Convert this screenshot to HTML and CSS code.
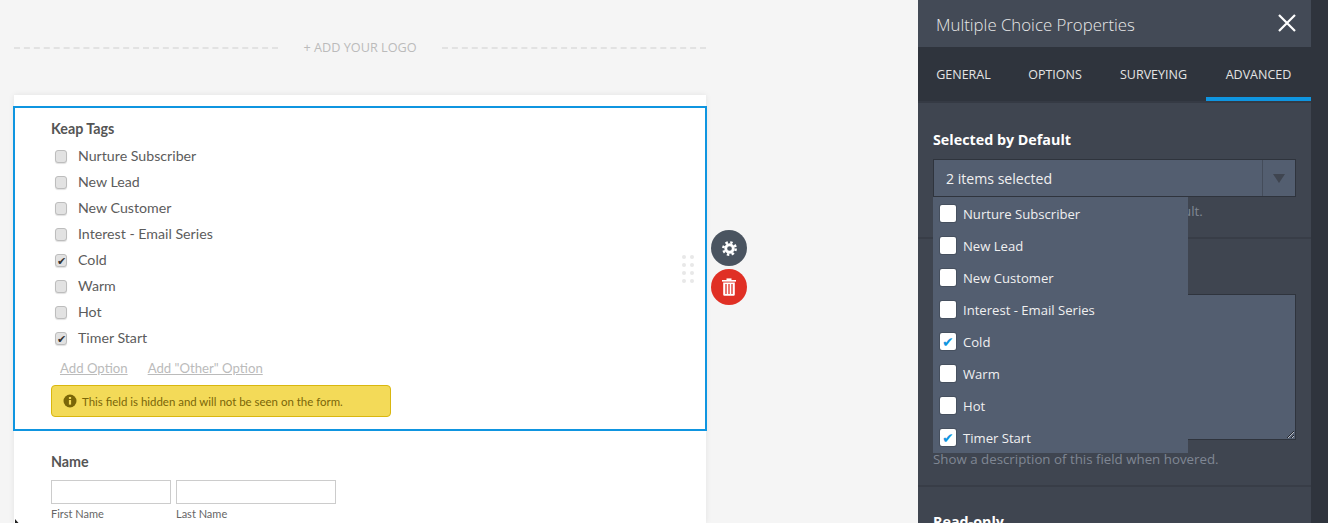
FILE: index.html
```html
<!DOCTYPE html>
<html lang="en">

<head>
    <meta charset="UTF-8" />
    <meta name="viewport" content="width=device-width, initial-scale=1.0" />
    <title>Form Builder</title>
    <link rel="stylesheet" href="styles.css">
</head>

<body>
    <main class="stage">
        <div class="logo-row">
            <span class="logo-line"></span>
            <span class="logo-text">+ ADD YOUR LOGO</span>
            <span class="logo-line"></span>
        </div>

        <div class="form-card">
            <section class="field-selected">
                <h3 class="field-label">Keap Tags</h3>
                <div class="option"><span class="box"></span>Nurture Subscriber</div>
                <div class="option"><span class="box"></span>New Lead</div>
                <div class="option"><span class="box"></span>New Customer</div>
                <div class="option"><span class="box"></span>Interest - Email Series</div>
                <div class="option"><span class="box checked">&#10004;</span>Cold</div>
                <div class="option"><span class="box"></span>Warm</div>
                <div class="option"><span class="box"></span>Hot</div>
                <div class="option"><span class="box checked">&#10004;</span>Timer Start</div>
                <div class="add-links">
                    <a href="#">Add Option</a>
                    <a href="#">Add "Other" Option</a>
                </div>
                <div class="notice">
                    <svg class="notice-icon" viewBox="0 0 14 14" width="14" height="14">
                        <circle cx="7" cy="7" r="6.5" fill="#7a6608" />
                        <rect x="5.9" y="6" width="2.2" height="4.6" fill="#f3da58" />
                        <rect x="5.9" y="3" width="2.2" height="2" fill="#f3da58" />
                    </svg>
                    This field is hidden and will not be seen on the form.
                </div>
                <div class="drag-dots">
                    <i></i><i></i><i></i><i></i><i></i><i></i><i></i><i></i>
                </div>
                <button class="round-btn gear-btn">
                    <svg viewBox="0 0 16 16" width="15" height="15">
                        <circle cx="8" cy="8" r="6.6" fill="none" stroke="#fff" stroke-width="2.6" stroke-dasharray="2.6 2.58" />
                        <circle cx="8" cy="8" r="4" fill="none" stroke="#fff" stroke-width="3" />
                    </svg>
                </button>
                <button class="round-btn trash-btn">
                    <svg viewBox="0 0 14 18" width="14" height="18">
                        <rect x="0" y="2" width="14" height="1.6" fill="#fff" />
                        <rect x="4.5" y="0.4" width="5" height="2" fill="#fff" />
                        <path d="M1.2 4.6h11.6v12a1.2 1.2 0 0 1-1.2 1.2H2.4a1.2 1.2 0 0 1-1.2-1.2z" fill="#fff" />
                        <path d="M4 6v10M7 6v10M10 6v10" stroke="#e03025" stroke-width="1.3" />
                    </svg>
                </button>
            </section>

            <section class="field-name">
                <h3 class="field-label">Name</h3>
                <div class="name-inputs">
                    <div class="name-col">
                        <input class="text-input first" type="text">
                        <span class="sub-label">First Name</span>
                    </div>
                    <div class="name-col">
                        <input class="text-input last" type="text">
                        <span class="sub-label">Last Name</span>
                    </div>
                </div>
            </section>
        </div>
    </main>

    <aside class="panel">
        <header class="panel-head">
            <span class="panel-title">Multiple Choice Properties</span>
            <svg class="panel-close" viewBox="0 0 18 18" width="18" height="18">
                <path d="M1 1l16 16M17 1L1 17" stroke="#fff" stroke-width="2.2" />
            </svg>
        </header>
        <nav class="tabs">
            <span class="tab tab-general">General</span>
            <span class="tab tab-options">Options</span>
            <span class="tab tab-surveying">Surveying</span>
            <span class="tab tab-advanced active">Advanced</span>
        </nav>

        <div class="section section-default">
            <div class="section-label">Selected by Default</div>
            <div class="select">
                <span class="select-value">2 items selected</span>
                <span class="select-arrow"></span>
                <div class="dropdown">
                    <div class="drop-item"><span class="drop-box"></span>Nurture Subscriber</div>
                    <div class="drop-item"><span class="drop-box"></span>New Lead</div>
                    <div class="drop-item"><span class="drop-box"></span>New Customer</div>
                    <div class="drop-item"><span class="drop-box"></span>Interest - Email Series</div>
                    <div class="drop-item"><span class="drop-box on">&#10004;</span>Cold</div>
                    <div class="drop-item"><span class="drop-box"></span>Warm</div>
                    <div class="drop-item"><span class="drop-box"></span>Hot</div>
                    <div class="drop-item"><span class="drop-box on">&#10004;</span>Timer Start</div>
                </div>
            </div>
            <div class="help help-default">ult.</div>
        </div>

        <div class="section section-hover">
            <textarea class="hover-text"></textarea>
            <div class="help">Show a description of this field when hovered.</div>
        </div>

        <div class="section section-readonly">
            <div class="section-label">Read-only</div>
        </div>
    </aside>
    <div class="panel-strip"></div>

    <svg class="cursor-mark" viewBox="0 0 4 4" width="4" height="4">
        <path d="M0 0l3.5 4H0z" fill="#222" />
    </svg>
</body>

</html>
```

FILE: styles.css
```css
* {
    box-sizing: border-box;
}

html,
body {
    height: 100%;
    margin: 0;
    overflow: hidden;
}

body {
    display: flex;
    font-family: Lato, "Open Sans", sans-serif;
    background: #f5f5f5;
    color: #555;
}

.stage {
    display: flex;
    flex-direction: column;
    width: 918px;
    height: 523px;
    flex: none;
    padding-top: 37px;
    padding-left: 14px;
}

.logo-row {
    display: flex;
    align-items: center;
    width: 692px;
    height: 20px;
}

.logo-line {
    width: 264px;
    margin-top: 2px;
    border-top: 2px dashed #e2e2e2;
}

.logo-text {
    width: 165px;
    text-align: center;
    font-family: "Open Sans", sans-serif;
    font-size: 12.7px;
    color: #bbb;
}

.form-card {
    flex: 1;
    width: 692px;
    margin-top: 38px;
    padding-top: 11px;
    background: #fff;
    box-shadow: 0 0 6px rgba(0, 0, 0, 0.08);
}

.field-selected {
    position: relative;
    height: 325px;
    margin: 0 -1px;
    padding: 11px 0 0 36px;
    border: 2px solid #0f95e0;
}

.field-label {
    margin: 0 0 4px;
    font-size: 14.3px;
    line-height: 20px;
    font-weight: 700;
    color: #555;
}

.option {
    display: flex;
    align-items: center;
    height: 26px;
    padding-bottom: 2px;
    font-size: 14.2px;
    color: #5c5c5c;
}

.box {
    width: 12px;
    height: 13px;
    margin: 2px 11px 0 4px;
    border: 1px solid #bdbdbd;
    border-radius: 3px;
    background: #e2e2e2;
    box-shadow: 0 1px 1px rgba(0, 0, 0, 0.12);
    font-size: 11px;
    line-height: 11px;
    text-align: center;
    color: #333;
}

.add-links {
    display: flex;
    gap: 20px;
    margin: 7px 0 0 9px;
    line-height: 20px;
    font-size: 13.2px;
}

.add-links a {
    color: #bbb;
}

.notice {
    display: flex;
    align-items: center;
    width: 340px;
    height: 32px;
    margin-top: 7px;
    padding-left: 11px;
    border: 1px solid #d9b70f;
    border-radius: 4px;
    background: #f3da58;
    font-size: 11.45px;
    color: #7a6608;
}

.notice-icon {
    margin-right: 5px;
}

.drag-dots {
    position: absolute;
    top: 147px;
    left: 667px;
    display: grid;
    grid-template-columns: 4px 4px;
    gap: 4px;
}

.drag-dots i {
    width: 4px;
    height: 4px;
    border-radius: 50%;
    background: #e8e8e8;
}

.round-btn {
    position: absolute;
    left: 696px;
    display: flex;
    align-items: center;
    justify-content: center;
    width: 36px;
    height: 36px;
    padding: 0;
    border: none;
    border-radius: 50%;
}

.gear-btn {
    top: 122px;
    background: #4a5460;
}

.trash-btn {
    top: 161px;
    background: #e03025;
}

.field-name {
    padding: 21px 0 0 37px;
}

.field-name .field-label {
    margin-bottom: 8px;
}

.name-inputs {
    display: flex;
    gap: 5px;
}

.name-col {
    display: flex;
    flex-direction: column;
}

.text-input {
    height: 24px;
    padding: 0;
    border: 1px solid #ccc;
    background: #fff;
}

.text-input.first {
    width: 120px;
}

.text-input.last {
    width: 160px;
}

.sub-label {
    margin-top: 2px;
    font-size: 11px;
    line-height: 16px;
    color: #666;
}

.panel {
    width: 393px;
    height: 523px;
    flex: none;
    overflow: hidden;
    background: #3f4550;
    font-family: "Open Sans", sans-serif;
    color: #fff;
}

.panel-strip {
    flex: 1;
    background: #2f343d;
}

.panel-head {
    display: flex;
    align-items: center;
    justify-content: space-between;
    height: 47px;
    padding: 0 15px 0 18px;
    background: #434a56;
}

.panel-title {
    padding-top: 2px;
    font-size: 16.8px;
    font-weight: 300;
    color: #e8e8e8;
}

.panel-close {
    margin-top: -1px;
}

.tabs {
    display: flex;
    height: 56px;
    border-bottom: 2px solid #353a44;
    background: #2f343d;
}

.tab {
    height: 54px;
    padding-top: 19px;
    border-bottom: 4px solid transparent;
    text-align: center;
    text-transform: uppercase;
    font-size: 12.5px;
    line-height: 18px;
    color: #e4e4e4;
}

.tab-general {
    width: 91px;
}

.tab-options {
    width: 92px;
}

.tab-surveying {
    width: 105px;
}

.tab-advanced {
    width: 105px;
}

.tab.active {
    border-bottom-color: #0f95e0;
}

.section {
    padding: 0 15px;
    border-bottom: 2px solid #383d47;
}

.section-default {
    height: 136px;
    padding-top: 27px;
}

.section-label {
    font-size: 14.3px;
    line-height: 20px;
    font-weight: 700;
}

.select {
    position: relative;
    display: flex;
    height: 38px;
    margin-top: 9px;
    border: 1px solid #2f343d;
    background: #535e70;
}

.select-value {
    flex: 1;
    padding-left: 12px;
    font-size: 14.1px;
    line-height: 38px;
    color: #f0f0f0;
}

.select-arrow {
    position: relative;
    width: 33px;
    border-left: 1px solid #444c5a;
}

.select-arrow::after {
    content: "";
    position: absolute;
    top: 14px;
    left: 10px;
    border-left: 6px solid transparent;
    border-right: 6px solid transparent;
    border-top: 9px solid #3f4550;
}

.dropdown {
    position: absolute;
    top: 37px;
    left: -1px;
    z-index: 2;
    width: 255px;
    height: 256px;
    background: #535e70;
}

.drop-item {
    display: flex;
    align-items: center;
    height: 32px;
    padding: 2px 0 0 7px;
    font-size: 13.1px;
    color: #f0f0f0;
}

.drop-box {
    width: 16px;
    height: 17px;
    margin-right: 7px;
    margin-bottom: 2px;
    border-radius: 2px;
    background: #fff;
    box-shadow: 0 0 0 1px rgba(0, 0, 0, 0.15);
    font-size: 14px;
    line-height: 17px;
    text-align: center;
    color: #0f95e0;
}

.help {
    font-size: 13.3px;
    line-height: 18px;
    color: #7f8794;
}

.help-default {
    margin-top: 5px;
    padding-left: 250px;
}

.section-hover {
    height: 248px;
    padding-top: 55px;
}

.hover-text {
    display: block;
    width: 363px;
    height: 146px;
    margin-bottom: 10px;
    border: 1px solid #2f343d;
    background: #535e70;
}

.section-readonly {
    padding-top: 25px;
    border: none;
}

.cursor-mark {
    position: absolute;
    top: 519px;
    left: 15px;
}
```
